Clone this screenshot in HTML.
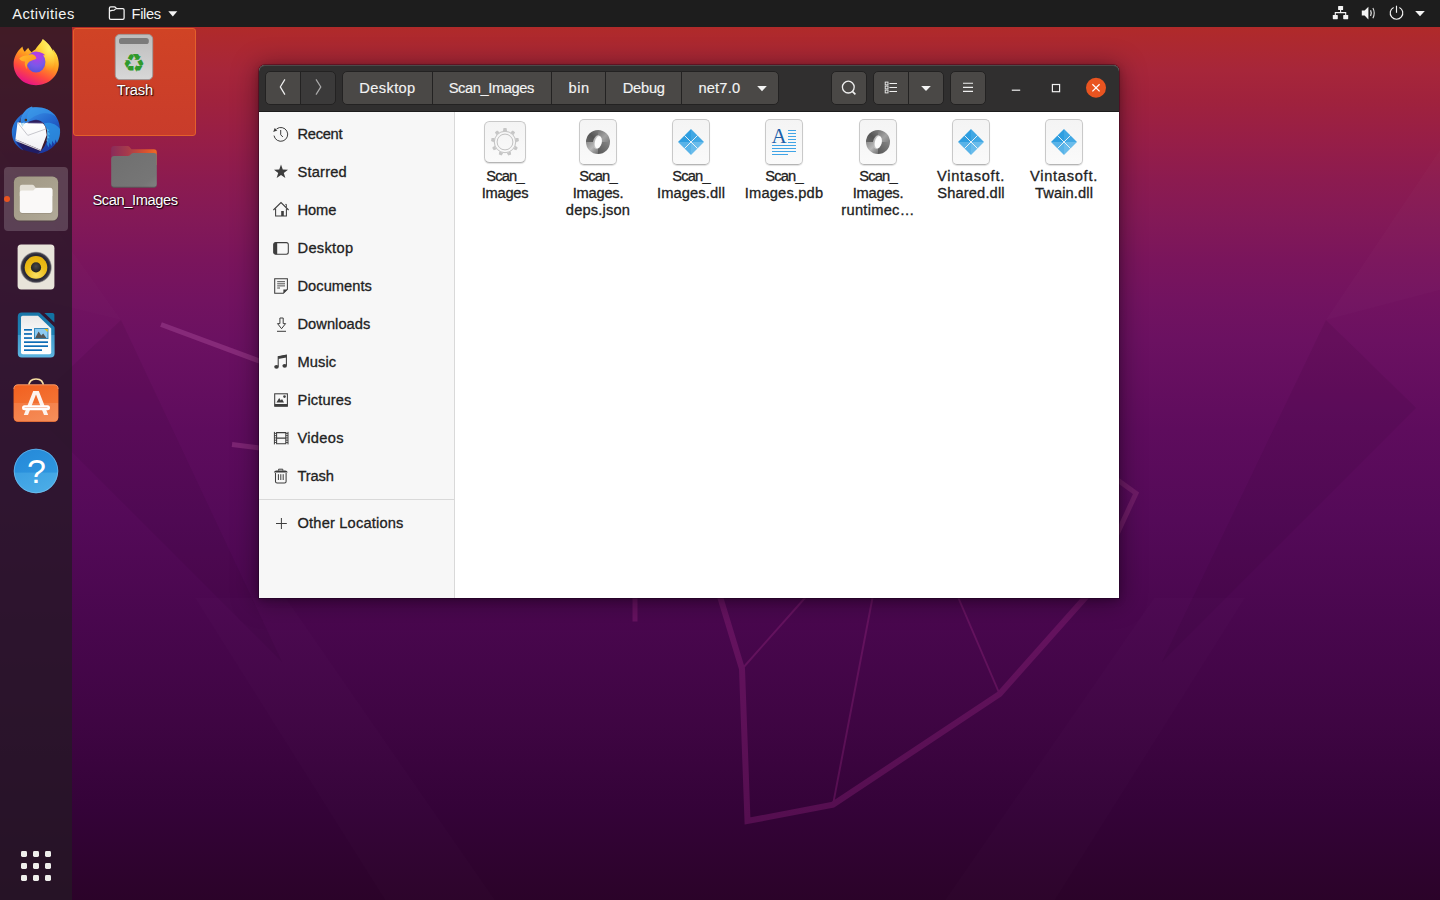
<!DOCTYPE html>
<html lang="en">
<head>
<meta charset="utf-8">
<title>Files</title>
<style>
*{box-sizing:border-box;margin:0;padding:0}
html,body{width:1440px;height:900px;overflow:hidden;background:#2c0428}
body{font-family:"Liberation Sans","DejaVu Sans",sans-serif;font-size:14.67px;color:#2e2e2e;position:relative}
.a{position:absolute}
svg{position:absolute;overflow:visible}
#wall{position:absolute;left:0;top:0;width:1440px;height:900px;
 background:linear-gradient(180deg,#b42c27 0px,#b02a2a 28px,#a7263a 70px,#a0223d 100px,#971e47 140px,#8c1b50 180px,#831957 220px,#7a155c 260px,#721360 300px,#6b1161 340px,#5e0c5d 430px,#540a58 520px,#49074e 620px,#3f0543 720px,#340338 810px,#2b0329 900px)}
/* top bar */
#top{position:absolute;left:0;top:0;width:1440px;height:27px;background:#1d1d1d;color:#f4f4f4}
#top .t{position:absolute;top:0;height:28px;line-height:28px;white-space:nowrap}
/* dock */
#dock{position:absolute;left:0;top:27px;width:72px;height:873px;background:rgba(38,24,38,.8)}
.dsk{position:absolute;color:#fff;white-space:nowrap;text-shadow:1px 1px 1px rgba(0,0,0,.9),0 0 2px rgba(0,0,0,.6)}
/* window */
#win{position:absolute;left:259px;top:65px;width:860px;height:533px;border-radius:6px 6px 0 0;background:#fff;box-shadow:0 0 0 1px rgba(20,0,20,.32),0 2px 7px rgba(0,0,0,.26),0 2px 26px 2px rgba(0,0,0,.36)}
#hb{position:absolute;z-index:2;left:0;top:0;width:860px;height:47px;background:#302f2f;border-radius:6px 6px 0 0;box-shadow:inset 0 1px 0 #4b4a49;border-bottom:1px solid #1c1c1c}
.b{position:absolute;top:6px;height:34px;background:#4a4846;border:1px solid #232222}
.bt{position:absolute;top:6px;height:34px;line-height:34px;color:#f3f3f3;-webkit-text-stroke:.15px #f3f3f3;white-space:nowrap}
#side{position:absolute;left:0;top:46px;width:196px;height:487px;background:#f7f7f7;border-right:1px solid #d9d9d9}
.si{position:absolute;left:38.5px;color:#222;-webkit-text-stroke:.3px #222;white-space:nowrap;height:20px;line-height:20px}
.fl{position:absolute;width:120px;text-align:center;line-height:17px;color:#222;-webkit-text-stroke:.3px #222;white-space:nowrap}
.pg{position:absolute;background:linear-gradient(180deg,#f4f4f4,#fafafa);border:1px solid #c9c9c9;border-bottom-color:#b5b5b5;border-radius:5px;box-shadow:0 1px 1px rgba(0,0,0,.12)}
</style>
</head>
<body>
<div id="wall">
<svg width="1440" height="900" viewBox="0 0 1440 900">
 <!-- subtle facets -->
 <polygon points="121,320 28,408 282,662" fill="#1a0020" opacity=".075"/>
 <polygon points="0,150 0,290 121,320" fill="#ffffff" opacity=".012"/>
 <polygon points="1326,320 1416,408 1162,662" fill="#1a0020" opacity=".075"/>
 <polygon points="1440,150 1440,290 1326,320" fill="#ffffff" opacity=".014"/>
 <polygon points="195,598 286,598 495,900 385,900" fill="#ffffff" opacity=".013"/>
 <polygon points="1245,598 1154,598 945,900 1055,900" fill="#ffffff" opacity=".013"/>
 <defs><linearGradient id="lg" gradientUnits="userSpaceOnUse" x1="0" y1="590" x2="0" y2="830"><stop offset="0" stop-color="#671361"/><stop offset="1" stop-color="#540e4f"/></linearGradient></defs>
 <!-- fossa line art -->
 <g fill="none" stroke-linecap="butt" stroke-linejoin="miter">
  <path d="M161 324.5 L262 362" stroke="#862a79" stroke-width="5"/>
  <path d="M232 444.4 L262 448.2" stroke="#7c2473" stroke-width="5"/>
  <path d="M1110 474.5 L1136 493.3 L1112 545" stroke="#6e1c67" stroke-width="5"/>
  <path d="M635 590 L635 621.5" stroke="#661260" stroke-width="5"/>
  <path d="M718 590 L742 669 L747.5 821 L833 804.6 L999.6 694 L1092 590" stroke="url(#lg)" stroke-width="6"/>
  <path d="M742 669 L812 590 M833 804.6 L874 590 M999.6 694 L955 590" stroke="url(#lg)" stroke-width="1.9"/>
 </g>
</svg>
</div>

<div id="top">
 <span class="t" style="left:12.2px;letter-spacing:.47px">Activities</span>
 <svg style="left:108px;top:5px" width="18" height="16" viewBox="0 0 18 16"><path d="M1.4 3.2 Q1.4 1.9 2.7 1.9 L6.4 1.9 Q7.2 1.9 7.7 2.6 L8.5 3.7 L14.8 3.7 Q16.1 3.7 16.1 5 L16.1 13 Q16.1 14.3 14.8 14.3 L2.7 14.3 Q1.4 14.3 1.4 13 Z M1.4 6.1 Q4.2 5.3 6.2 5.1 L7.6 3.9" fill="none" stroke="#f4f4f4" stroke-width="1.25" stroke-linejoin="round"/></svg>
 <span class="t" style="left:131.6px;letter-spacing:-.39px">Files</span>
 <svg style="left:167.5px;top:11px" width="10" height="6" viewBox="0 0 10 6"><path d="M0.3 0.2 L9.3 0.2 L4.8 5.4 Z" fill="#f4f4f4"/></svg>
 <!-- network -->
 <svg style="left:1332px;top:5px" width="18" height="16" viewBox="0 0 18 16"><g fill="#f4f4f4"><rect x="6.1" y="1" width="5" height="4" rx=".6"/><rect x="0.8" y="10" width="5" height="4.2" rx=".6"/><rect x="11.2" y="10" width="5" height="4.2" rx=".6"/></g><path d="M8.6 5 V7.6 M3.3 10 V7.6 H13.7 V10" fill="none" stroke="#f4f4f4" stroke-width="1.1"/></svg>
 <!-- volume -->
 <svg style="left:1361px;top:5px" width="18" height="16" viewBox="0 0 18 16"><path d="M0.8 5.6 H3.6 L7.4 1.8 V14.4 L3.6 10.6 H0.8 Z" fill="#f4f4f4"/><path d="M9.6 5.2 Q11 8.1 9.6 11" fill="none" stroke="#f4f4f4" stroke-width="1.15"/><path d="M11.9 3 Q14.6 8.1 11.9 13.2" fill="none" stroke="#d8d8d8" stroke-width="1.15"/></svg>
 <!-- power -->
 <svg style="left:1388px;top:4px" width="18" height="18" viewBox="0 0 18 18"><path d="M5.6 3.4 A6.3 6.3 0 1 0 11.4 3.4" fill="none" stroke="#f4f4f4" stroke-width="1.15"/><path d="M8.5 1.7 V8.8" stroke="#f4f4f4" stroke-width="1.15"/></svg>
 <svg style="left:1415px;top:11px" width="10" height="6" viewBox="0 0 10 6"><path d="M0.2 0 L9.8 0 L5 5.2 Z" fill="#f4f4f4"/></svg>
</div>
<div id="dock">
 <!-- coordinates inside dock are page y minus 27 -->
 <!-- Firefox: page (12,38) -->
 <svg style="left:12px;top:11px" width="48" height="48" viewBox="0 0 48 48">
  <defs>
   <linearGradient id="ff1" x1=".8" y1="0" x2=".32" y2="1"><stop offset="0" stop-color="#fff36a"/><stop offset=".22" stop-color="#ffd83a"/><stop offset=".48" stop-color="#ff9a1f"/><stop offset=".74" stop-color="#ff4a3e"/><stop offset="1" stop-color="#e5108c"/></linearGradient>
   <radialGradient id="ff2" cx=".55" cy=".2" r=".9"><stop offset="0" stop-color="#c038e6"/><stop offset=".55" stop-color="#7a58e8"/><stop offset="1" stop-color="#4f52d6"/></radialGradient>
   <linearGradient id="ff3" x1="0" y1="0" x2="1" y2="1"><stop offset="0" stop-color="#ffbd2f"/><stop offset="1" stop-color="#ff8a16"/></linearGradient>
   <radialGradient id="ff4" cx=".7" cy=".3" r=".7"><stop offset="0" stop-color="#fff36a" stop-opacity=".9"/><stop offset="1" stop-color="#ffd83a" stop-opacity="0"/></radialGradient>
  </defs>
  <path d="M10.5 8.4 C4.4 13.6 1.6 19.8 1.6 26 C1.6 38 11.6 47.2 24 47.2 C36.6 47.2 46.8 38 46.8 26 C46.8 19.6 44 14.4 40.6 11 C40.9 12 41.2 13 41.3 14 C39.2 8.6 34.6 3.8 30.8 .9 C29.2 5 25.2 8 23.3 11.4 C22 12 20.6 13 19.6 14.2 C18 12.9 16.6 11.2 16.3 9.8 C15 11 13.6 12.4 12.9 13.8 C11.6 12.2 10.6 10.2 10.5 8.4 Z" fill="url(#ff1)"/>
  <path d="M30.8 .9 C34.6 3.8 39.2 8.6 41.3 14 C43 19 43.5 26 40 32 C36 36 32 30 33.4 24 C33.6 18 28 14 23.3 11.4 C25.2 8 29.2 5 30.8 .9Z" fill="url(#ff4)"/>
  <ellipse cx="24" cy="24" rx="9.4" ry="10.6" fill="url(#ff2)"/>
  <path d="M27 14.2 C30.4 14.6 32.4 16 33.2 17.4 C31.6 17 30.6 17.6 30 19 Z" fill="#a93ee2"/>
  <path d="M7.2 20.6 C9.6 18 13 17.2 16 17.6 C17.4 16.4 19.4 15.8 21 16.4 C23 17.2 24.3 19 24.4 20.6 C22.6 22.2 19.6 22.2 17.6 23.6 C15.2 25.4 14.2 28.6 15.2 31.4 C13 29 12.2 25.8 13.2 23.6 C10.6 23.8 8.4 22.4 7.2 20.6 Z" fill="url(#ff3)"/>
 </svg>
 <!-- Thunderbird: page (12,107) -->
 <svg style="left:11px;top:79px" width="50" height="50" viewBox="0 0 50 50">
  <defs>
   <linearGradient id="tb1" x1=".2" y1="0" x2=".75" y2="1"><stop offset="0" stop-color="#3d97ea"/><stop offset=".45" stop-color="#2468cf"/><stop offset="1" stop-color="#1a2f98"/></linearGradient>
   <linearGradient id="tb2" x1="0" y1="0" x2="1" y2="1"><stop offset="0" stop-color="#2f8be2"/><stop offset=".5" stop-color="#2063c9"/><stop offset="1" stop-color="#1c3aa3"/></linearGradient>
   <linearGradient id="tb3" x1="0" y1="0" x2="0" y2="1"><stop offset="0" stop-color="#ffffff"/><stop offset="1" stop-color="#f1f1f4"/></linearGradient>
  </defs>
  <!-- left ring part -->
  <path d="M12 7.4 C4.4 12.6 .8 20 .8 26 C.8 34.6 5.6 41 12.4 44.4 C10 40 7.4 35 6.6 30 C5.6 24 7.6 16 12 7.4Z" fill="url(#tb2)"/>
  <!-- envelope -->
  <path d="M6.5 16.5 L31.4 16.5 L34.3 20.4 L35.7 29 L30 43.9 L4.4 33.3 Z" fill="url(#tb3)"/>
  <path d="M6.8 16.8 L16.8 29.4 L34.2 23.2" fill="none" stroke="#b9b9c0" stroke-width=".8"/>
  <path d="M4.4 33.3 L30 43.9 L29.4 45 L4.6 35 Z" fill="#c9c9d4"/>
  <!-- dark gap -->
  <path d="M5 35.4 L29.4 45.2 L26.2 47.6 C22 46 18 46 13.4 44.2 C10 42 7 39 5 35.4 Z" fill="#1b1f6e" opacity=".85"/>
  <!-- bird body -->
  <path d="M10.4 18.4 L9.4 15 C10 9 14 3.4 19.6 1 L21 .4 L21.6 1.6 C30 .4 40 3 45.6 11.4 C50.4 19 50 30 45 37.6 C40 44 34 47 26.2 47.8 C31 45 33.6 41 35 37 C37 33 37.2 27 35.4 22 C33.6 16.4 28 13.6 23.6 14.4 C19 15.4 14 17 10.4 18.4 Z" fill="url(#tb1)"/>
  <path d="M21.6 1.6 C30 .4 40 3 45.6 11.4 C42 8 36 6.6 31 7.6 C26 8.6 20 12 16 15.8 C15 11 17 5 21.6 1.6Z" fill="#3a9bea" opacity=".55"/>
  <path d="M9.6 17.6 L13.6 16.6 L11.6 21 Z" fill="#bfe4f2"/>
  <circle cx="14.9" cy="14" r="1.25" fill="#2b1a10"/><circle cx="14.9" cy="14" r=".55" fill="#d88b2a"/>
  <!-- feathers -->
  <path d="M32.8 17.6 C38 15.6 45 17.6 49 23 C49.6 28 48.4 33 46 37 L44.4 33.4 L43.4 38.4 L41.2 34.8 L40.6 40 L38.4 36.6 L37.6 41.4 L35.8 38 C37.4 33 37.4 27 35.4 22 Z" fill="#2f9ae8" opacity=".75"/>
  <path d="M35.4 22 L38.4 24.6 L36.6 25.2 L39.2 28.4 L36.9 28.8 L38.6 32.2 L36.5 32.2 L37 36 L35.4 34.4 C36.6 30 36.6 26 35.4 22Z" fill="#5fc0f2" opacity=".85"/>
  <path d="M17.2 16.5 C20 14.6 23 13.6 25.4 13.8 C28.6 14 31 15.6 32.8 17.9 L31.4 17.5 L16.5 17.2 Z" fill="#2a1f6a" opacity=".8"/>
 </svg>
 <!-- Files highlight: page (4,167) -->
 <div class="a" style="left:4px;top:140px;width:64px;height:64px;border-radius:4px;background:rgba(255,255,255,.18)"></div>
 <div class="a" style="left:4px;top:169px;width:6px;height:6px;border-radius:3px;background:#e95420"></div>
 <svg style="left:13px;top:149px" width="46" height="46" viewBox="0 0 46 46">
  <defs><linearGradient id="fi1" x1="0" y1="0" x2="1" y2="1"><stop offset="0" stop-color="#a19985"/><stop offset=".5" stop-color="#a8a08d"/><stop offset="1" stop-color="#b1aa98"/></linearGradient></defs>
  <rect x=".6" y=".6" width="44.8" height="45" rx="6" fill="#4a4138" opacity=".55"/>
  <rect x=".9" y=".6" width="44.2" height="44" rx="5.6" fill="url(#fi1)"/>
  <path d="M6.8 11 Q6.8 8.8 9 8.8 L19.4 8.8 Q20.4 8.8 21 9.6 L22.6 11.8 L37.4 11.8 Q39.4 11.8 39.4 13.8 L39.4 20 L6.8 20 Z" fill="#e3dfd5"/>
  <path d="M6.8 16.6 Q6.8 14.6 8.8 14.6 L19.2 14.6 Q20.2 14.6 20.9 13.9 L22 12.6 Q22.7 11.9 23.7 11.9 L37.4 11.9 Q39.4 11.9 39.4 13.9 L39.4 34.8 Q39.4 37 37.2 37 L9 37 Q6.8 37 6.8 34.8 Z" fill="#faf9f8"/>
  <path d="M6.8 34 Q6.8 37 9 37 L37.2 37 Q39.4 37 39.4 34 L39.4 34.8 Q39.4 37.8 37.2 37.8 L9 37.8 Q6.8 37.8 6.8 34.8Z" fill="#8c8473" opacity=".6"/>
 </svg>
 <!-- Rhythmbox: page (17.6,244.6) -->
 <svg style="left:17px;top:217px" width="38" height="46" viewBox="0 0 38 46">
  <defs>
   <radialGradient id="rb1" cx=".5" cy=".85" r=".85"><stop offset="0" stop-color="#f8df62"/><stop offset=".55" stop-color="#ecbd19"/><stop offset="1" stop-color="#e6b10c"/></radialGradient>
   <radialGradient id="rb2" cx=".5" cy=".5" r=".5"><stop offset="0" stop-color="#2a2936"/><stop offset=".8" stop-color="#2a2936"/><stop offset=".9" stop-color="#34323f" stop-opacity=".9"/><stop offset="1" stop-color="#6a6870" stop-opacity=".0"/></radialGradient>
   <radialGradient id="rb3" cx=".5" cy=".4" r=".6"><stop offset="0" stop-color="#4a4a4a"/><stop offset="1" stop-color="#1e1e1e"/></radialGradient>
  </defs>
  <rect x=".6" y=".6" width="36.8" height="44.8" rx="3.6" fill="#e8e4da"/>
  <circle cx="19" cy="23.4" r="16.2" fill="url(#rb2)"/>
  <circle cx="19" cy="23.4" r="11.3" fill="url(#rb1)"/>
  <circle cx="19" cy="23.4" r="5.1" fill="url(#rb3)"/>
 </svg>
 <!-- Writer: page (17.8,312.6) -->
 <svg style="left:17px;top:285px" width="38" height="46" viewBox="0 0 38 46">
  <defs>
   <linearGradient id="lw1" x1="0" y1="0" x2="0" y2="1"><stop offset="0" stop-color="#1876a8"/><stop offset=".49" stop-color="#1f82b6"/><stop offset=".51" stop-color="#3f9bcd"/><stop offset="1" stop-color="#5db4e0"/></linearGradient>
   <linearGradient id="lw2" x1="0" y1="0" x2="0" y2="1"><stop offset="0" stop-color="#e9e9e9"/><stop offset=".5" stop-color="#fafafa"/><stop offset="1" stop-color="#ffffff"/></linearGradient>
  </defs>
  <path d="M.8 4.6 Q.8 .6 4.8 .6 L21.4 .6 Q22.6 .6 23.4 1.4 L36.8 14.2 Q37.6 15 37.6 16 L37.6 41.4 Q37.6 45.4 33.6 45.4 L4.8 45.4 Q.8 45.4 .8 41.4 Z" fill="url(#lw1)"/>
  <path d="M4 5.4 Q4 3.8 5.6 3.8 L21 3.8 L34.2 16.4 L34.2 40.4 Q34.2 42.2 32.4 42.2 L5.8 42.2 Q4 42.2 4 40.4 Z" fill="url(#lw2)"/>
  <path d="M27.4 1 L35.6 1 Q37.4 1 37.4 2.8 L37.4 10.4 Z" fill="#1272a3"/>
  <g fill="#0d6cb5"><rect x="7" y="17" width="8" height="1.7"/><rect x="7" y="21.1" width="8" height="1.7"/><rect x="7" y="25.2" width="8" height="1.7"/><rect x="7" y="29.3" width="24" height="1.7"/><rect x="7" y="33.3" width="24" height="1.7"/><rect x="7" y="37.3" width="18" height="1.7"/></g>
  <rect x="17.4" y="16.6" width="13.6" height="10" fill="#8ccaf2" stroke="#1677b0" stroke-width=".8"/>
  <path d="M18 26.2 L21.6 19.6 L24.2 23.6 L26.2 21.6 L29.6 26.2 Z" fill="#555"/>
  <path d="M27.4 17 L30.6 17 L30.6 20 Z" fill="#f5c400"/>
 </svg>
 <!-- Software: page (13.8,384.8) bag; handle top 379 -->
 <svg style="left:13px;top:350px" width="46" height="46" viewBox="0 0 46 46">
  <defs>
   <linearGradient id="sw1" x1="0" y1="0" x2="1" y2="1"><stop offset="0" stop-color="#f2601f"/><stop offset="1" stop-color="#f37435"/></linearGradient>
   <linearGradient id="sw2" x1="0" y1="0" x2="1" y2="1"><stop offset="0" stop-color="#f47a41"/><stop offset="1" stop-color="#f58f5b"/></linearGradient>
  </defs>
  <path d="M15.8 9.6 Q15.8 2 23 2 Q30.4 2 30.4 9.6" fill="none" stroke="#f8dfa2" stroke-width="1.7"/>
  <rect x=".6" y="7.6" width="44.8" height="37.4" rx="4.4" fill="#c8501e"/>
  <path d="M.8 12 Q.8 7.8 5 7.8 L41 7.8 Q45.2 7.8 45.2 12 L45.2 26 L.8 26 Z" fill="url(#sw1)"/>
  <path d="M.8 26 L45.2 26 L45.2 40.2 Q45.2 44.4 41 44.4 L5 44.4 Q.8 44.4 .8 40.2 Z" fill="url(#sw2)"/>
  <path d="M.8 12 Q.8 7.8 5 7.8 L41 7.8 Q45.2 7.8 45.2 12" fill="none" stroke="#fbb48a" stroke-width=".8" opacity=".8"/>
  <path d="M20.2 14 L25.8 14 L35.2 38 L31 38 L23 17.6 L15 38 L10.8 38 Z" fill="#fdf3ee"/>
  <rect x="9" y="28.2" width="28" height="5" rx="2.5" fill="#ffffff"/>
  <rect x="11.4" y="30.3" width="23.2" height=".8" rx=".4" fill="#f9b9a0"/>
 </svg>
 <!-- Help: page center (36,471) r 22.2 -->
 <svg style="left:13px;top:421px" width="46" height="46" viewBox="0 0 46 46">
  <defs><linearGradient id="hp1" x1="0" y1="0" x2="1" y2="1"><stop offset="0" stop-color="#2488d8"/><stop offset="1" stop-color="#2f97e0"/></linearGradient>
  <linearGradient id="hp2" x1="0" y1="0" x2="1" y2="1"><stop offset="0" stop-color="#3b9fe2"/><stop offset="1" stop-color="#4fb0e8"/></linearGradient>
  <clipPath id="hpc"><circle cx="23" cy="23" r="22.2"/></clipPath></defs>
  <g clip-path="url(#hpc)"><rect x="0" y="0" width="46" height="26" fill="url(#hp1)"/><rect x="0" y="24.6" width="46" height="22" fill="url(#hp2)"/></g>
  <circle cx="23" cy="23" r="21.8" fill="none" stroke="#8fcbf2" stroke-width=".7" opacity=".7"/>
  <text x="23.4" y="35.4" text-anchor="middle" font-family="Liberation Sans, sans-serif" font-size="34" fill="#ffffff">?</text>
 </svg>
 <!-- apps grid: page (21,851) -->
 <svg style="left:21px;top:824px" width="30" height="30" viewBox="0 0 30 30"><g fill="#eeeeec"><rect x="0" y="0" width="6" height="6" rx="1.4"/><rect x="12" y="0" width="6" height="6" rx="1.4"/><rect x="24" y="0" width="6" height="6" rx="1.4"/><rect x="0" y="12" width="6" height="6" rx="1.4"/><rect x="12" y="12" width="6" height="6" rx="1.4"/><rect x="24" y="12" width="6" height="6" rx="1.4"/><rect x="0" y="24" width="6" height="6" rx="1.4"/><rect x="12" y="24" width="6" height="6" rx="1.4"/><rect x="24" y="24" width="6" height="6" rx="1.4"/></g></svg>
</div>

<!-- desktop icons -->
<div class="a" style="left:73px;top:28px;width:123px;height:108px;border-radius:3px;background:linear-gradient(180deg,#d04325,#c93c2b);border:1px solid #e3602b"></div>
<svg style="left:114px;top:33px" width="40" height="48" viewBox="0 0 40 48">
 <defs><linearGradient id="tr1" x1="0" y1="0" x2="0" y2="1"><stop offset="0" stop-color="#bcbcbc"/><stop offset="1" stop-color="#d8d8d8"/></linearGradient></defs>
 <rect x="1.3" y="1.4" width="37.4" height="45.2" rx="4.6" fill="url(#tr1)" stroke="#9b9b9b" stroke-width=".9"/>
 <rect x="5" y="5" width="29.8" height="6" rx="2.6" fill="#7b7b7b"/>
 <text x="20" y="39.2" text-anchor="middle" font-family="DejaVu Sans, sans-serif" font-size="25.5" fill="#2f9a2c">♻</text>
</svg>
<span class="dsk" style="left:116.7px;top:81px;line-height:18px;letter-spacing:-.11px">Trash</span>
<svg style="left:110px;top:145px" width="48" height="44" viewBox="0 0 48 44">
 <defs><linearGradient id="fo1" x1="0" y1="0" x2="1" y2="0"><stop offset="0" stop-color="#8a2c5a"/><stop offset=".35" stop-color="#a53a4c"/><stop offset=".75" stop-color="#d8522f"/><stop offset="1" stop-color="#ee6a24"/></linearGradient>
 <linearGradient id="fo2" x1="0" y1="0" x2="1" y2="1"><stop offset="0" stop-color="#6f6f6f"/><stop offset=".8" stop-color="#767676"/><stop offset="1" stop-color="#808080"/></linearGradient></defs>
 <path d="M1.2 4 Q1.2 1 4.2 1 L17.6 1 Q18.8 1 19.6 1.9 L21.4 4.2 L43.8 4.2 Q46.8 4.2 46.8 7.2 L46.8 20 L1.2 20 Z" fill="url(#fo1)"/>
 <path d="M1.2 14 Q1.2 11 4.2 11 L17.8 11 Q19 11 19.9 10.2 L21.4 8.8 Q22.3 8 23.5 8 L43.8 8 Q46.8 8 46.8 11 L46.8 39.6 Q46.8 42.6 43.8 42.6 L4.2 42.6 Q1.2 42.6 1.2 39.6 Z" fill="url(#fo2)"/>
 <path d="M1.2 38.8 Q1.2 41.8 4.2 41.8 L43.8 41.8 Q46.8 41.8 46.8 38.8 L46.8 39.8 Q46.8 42.8 43.8 42.8 L4.2 42.8 Q1.2 42.8 1.2 39.8Z" fill="#4d4d4d" opacity=".7"/>
</svg>
<span class="dsk" style="left:92.4px;top:191px;line-height:18px;letter-spacing:-.39px">Scan_Images</span>
<div id="win">
 <div id="hb">
  <!-- nav -->
  <div class="b" style="left:6px;width:36px;border-radius:5px 0 0 5px"></div>
  <div class="b" style="left:41px;width:36px;border-radius:0 5px 5px 0;background:#3b3a3a"></div>
  <svg style="left:0;top:0" width="90" height="46" viewBox="0 0 90 46"><path d="M25.9 14.4 L21.3 21.9 L25.9 29.6" fill="none" stroke="#f0f0f0" stroke-width="1.2"/><path d="M57 14.4 L61.8 21.9 L57 29.6" fill="none" stroke="#a9a9a9" stroke-width="1.2"/></svg>
  <!-- path bar -->
  <div class="b" style="left:83px;width:91px;border-radius:5px 0 0 5px"></div>
  <div class="b" style="left:173px;width:120px;border-radius:0"></div>
  <div class="b" style="left:292px;width:55px;border-radius:0"></div>
  <div class="b" style="left:346px;width:77px;border-radius:0"></div>
  <div class="b" style="left:422px;width:98px;border-radius:0 5px 5px 0"></div>
  <span class="bt" style="left:100.3px;letter-spacing:.36px">Desktop</span>
  <span class="bt" style="left:189.7px;letter-spacing:-.39px">Scan_Images</span>
  <span class="bt" style="left:309.5px;letter-spacing:.51px">bin</span>
  <span class="bt" style="left:363.7px;letter-spacing:-.23px">Debug</span>
  <span class="bt" style="left:439.5px;letter-spacing:.16px">net7.0</span>
  <svg style="left:498px;top:20px" width="10" height="7" viewBox="0 0 10 7"><path d="M.2 .9 L9.8 .9 L5 6.3 Z" fill="#f3f3f3"/></svg>
  <!-- search -->
  <div class="b" style="left:572px;width:36px;border-radius:5px"></div>
  <svg style="left:580px;top:13px" width="20" height="20" viewBox="0 0 20 20"><circle cx="9.3" cy="9.1" r="5.9" fill="none" stroke="#f0f0f0" stroke-width="1.3"/><path d="M13.4 13.4 L16.4 16.4" stroke="#f0f0f0" stroke-width="1.6"/></svg>
  <!-- view -->
  <div class="b" style="left:614px;width:36px;border-radius:5px 0 0 5px"></div>
  <div class="b" style="left:649px;width:36px;border-radius:0 5px 5px 0"></div>
  <svg style="left:625px;top:15px" width="14" height="14" viewBox="0 0 14 14"><g fill="none" stroke="#f0f0f0" stroke-width=".9"><rect x="1.2" y="2.1" width="2.8" height="2.8"/><rect x="1.2" y="6.1" width="2.8" height="2.8"/><rect x="1.2" y="10.1" width="2.8" height="2.8"/></g><path d="M5.4 3.5 H13 M5.4 7.5 H13 M5.4 11.5 H13" stroke="#f0f0f0" stroke-width="1.1"/></svg>
  <svg style="left:662px;top:20px" width="10" height="7" viewBox="0 0 10 7"><path d="M.2 .9 L9.8 .9 L5 6.1 Z" fill="#f3f3f3"/></svg>
  <!-- menu -->
  <div class="b" style="left:691px;width:36px;border-radius:5px"></div>
  <svg style="left:703px;top:15px" width="12" height="14" viewBox="0 0 12 14"><path d="M1 3.2 H11 M1 7.3 H11 M1 11.4 H11" stroke="#f0f0f0" stroke-width="1.15"/></svg>
  <!-- window controls -->
  <svg style="left:745px;top:10px" width="110" height="26" viewBox="0 0 110 26"><path d="M7.8 15.2 H16.2" stroke="#f0f0f0" stroke-width="1.2"/><rect x="48.4" y="9.5" width="7.2" height="7.2" fill="none" stroke="#f0f0f0" stroke-width="1.2"/><circle cx="92" cy="12.8" r="10" fill="#e95420"/><path d="M88.4 9.2 L95.6 16.4 M95.6 9.2 L88.4 16.4" stroke="#ffffff" stroke-width="1.25"/></svg>
 </div>
 <div id="side">
  <!-- icons at x=14, rows centre 23+38i -->
  <svg style="left:14px;top:15px" width="16" height="16" viewBox="0 0 16 16"><path d="M1 9.6 A6.9 6.9 0 1 0 3.6 2.9" fill="none" stroke="#3d3d3d" stroke-width="1"/><path d="M.2 5.9 L1.7 2.1 L4.3 4.6 Z" fill="#3d3d3d"/><path d="M7.7 4 V8.8 L9.9 11" fill="none" stroke="#3d3d3d" stroke-width="1"/></svg>
  <svg style="left:14px;top:53px" width="16" height="16" viewBox="0 0 16 16"><path d="M8 .6 L9.75 5.6 L15 5.7 L10.8 8.9 L12.35 14 L8 10.95 L3.65 14 L5.2 8.9 L1 5.7 L6.25 5.6 Z" fill="#3d3d3d"/></svg>
  <svg style="left:14px;top:91px" width="16" height="16" viewBox="0 0 16 16"><path d="M.4 8 L8 .6 L15.6 8" fill="none" stroke="#3d3d3d" stroke-width="1.05"/><path d="M2.6 6.4 V14 H13.4 V6.4" fill="none" stroke="#3d3d3d" stroke-width="1.05"/><rect x="8.2" y="9" width="2.6" height="5" fill="#3d3d3d"/><path d="M12.3 2.4 H13.4 V5" fill="none" stroke="#3d3d3d" stroke-width=".9"/></svg>
  <svg style="left:14px;top:129px" width="16" height="16" viewBox="0 0 16 16"><rect x=".7" y="2.6" width="14.6" height="11.6" rx="2" fill="none" stroke="#3d3d3d" stroke-width="1.05"/><path d="M2.7 2.6 H4.2 V14.2 H2.7 Q.7 14.2 .7 12.2 V4.6 Q.7 2.6 2.7 2.6Z" fill="#3d3d3d"/></svg>
  <svg style="left:14px;top:167px" width="16" height="16" viewBox="0 0 16 16"><path d="M1.7 .8 H14.4 V11.4 L10.4 15.3 H1.7 Z" fill="none" stroke="#3d3d3d" stroke-width="1.05"/><path d="M14.4 11.4 H10.4 V15.3 Z" fill="#3d3d3d"/><path d="M4.2 3.7 H12 M4.2 5.8 H12 M4.2 7.9 H12 M4.2 10 H7" stroke="#3d3d3d" stroke-width=".9"/></svg>
  <svg style="left:14px;top:205px" width="16" height="16" viewBox="0 0 16 16"><path d="M6.9 2 H10.2 V7.6 H12.6 L8.55 12.7 L4.5 7.6 H6.9 Z" fill="none" stroke="#3d3d3d" stroke-width="1"/><path d="M4 15.3 H13" stroke="#3d3d3d" stroke-width="1"/></svg>
  <svg style="left:14px;top:243px" width="16" height="16" viewBox="0 0 16 16"><path d="M5.2 12.6 V2.8 L13.4 1.2 V11.6" fill="none" stroke="#3d3d3d" stroke-width="1.05"/><path d="M5.2 2.4 L13.4 .8 V3.4 L5.2 5 Z" fill="#3d3d3d"/><ellipse cx="3.5" cy="12.8" rx="2.3" ry="1.9" fill="#3d3d3d"/><ellipse cx="11.7" cy="11.8" rx="2.3" ry="1.9" fill="#3d3d3d"/></svg>
  <svg style="left:14px;top:281px" width="16" height="16" viewBox="0 0 16 16"><rect x="1.7" y="1.8" width="12.7" height="12.4" fill="none" stroke="#3d3d3d" stroke-width="1.05"/><rect x="1.7" y="12" width="12.7" height="2.4" fill="#3d3d3d"/><path d="M3.4 10.6 L6.2 6 L7.8 8.4 L9 7 L11 10.6 Z" fill="#3d3d3d"/><circle cx="11.5" cy="4.6" r="1.3" fill="#3d3d3d"/></svg>
  <svg style="left:14px;top:319px" width="16" height="16" viewBox="0 0 16 16"><path d="M1.4 1.9 V14.4 M15 1.9 V14.4" stroke="#3d3d3d" stroke-width="1"/><path d="M3.6 2.6 H12.8 V13.7 H3.6 Z M3.6 8.1 H12.8" fill="none" stroke="#3d3d3d" stroke-width="1.05"/><path d="M1.4 3.4 H3.4 M1.4 5.6 H3.4 M1.4 7.9 H3.4 M1.4 10.2 H3.4 M1.4 12.5 H3.4 M13 3.4 H15 M13 5.6 H15 M13 7.9 H15 M13 10.2 H15 M13 12.5 H15" stroke="#3d3d3d" stroke-width=".9"/></svg>
  <svg style="left:14px;top:357px" width="16" height="16" viewBox="0 0 16 16"><path d="M5.6 2.6 V1.2 H9.8 V2.6" fill="none" stroke="#3d3d3d" stroke-width="1"/><path d="M.9 4.6 Q1.4 2.6 3.4 2.6 H12.2 Q14.2 2.6 14.7 4.6 Z" fill="#3d3d3d"/><path d="M2.5 5 V13.4 Q2.5 15 4.1 15 H11.5 Q13.1 15 13.1 13.4 V5" fill="none" stroke="#3d3d3d" stroke-width="1.05"/><path d="M5.4 6.2 V12 M7.8 6.2 V12 M10.2 6.2 V12" stroke="#3d3d3d" stroke-width="1"/></svg>
  <svg style="left:14px;top:404px" width="16" height="16" viewBox="0 0 16 16"><path d="M3 8.5 H13.8 M8.4 3 V14" stroke="#3d3d3d" stroke-width="1"/></svg>
  <span class="si" style="top:13px;letter-spacing:-.28px">Recent</span>
  <span class="si" style="top:51px;letter-spacing:.2px">Starred</span>
  <span class="si" style="top:89px;letter-spacing:-.08px">Home</span>
  <span class="si" style="top:127px;letter-spacing:.3px">Desktop</span>
  <span class="si" style="top:165px;letter-spacing:.03px">Documents</span>
  <span class="si" style="top:203px;letter-spacing:.03px">Downloads</span>
  <span class="si" style="top:241px;letter-spacing:.1px">Music</span>
  <span class="si" style="top:279px;letter-spacing:.13px">Pictures</span>
  <span class="si" style="top:317px;letter-spacing:.3px">Videos</span>
  <span class="si" style="top:355px;letter-spacing:-.11px">Trash</span>
  <div class="a" style="left:0;top:388px;width:195px;height:1px;background:#d9d9d9"></div>
  <span class="si" style="top:402px;letter-spacing:.17px">Other Locations</span>
 </div>
 <!-- files; coordinates relative to window (259,65) -->
 <!-- 1 executable: centre 246 -->
 <div class="pg" style="left:225px;top:56px;width:42px;height:42px;border-radius:5.5px"></div>
 <svg style="left:231px;top:62px" width="30" height="30" viewBox="-15 -15 30 30"><g fill="#c6c6c6"><path transform="rotate(0)" d="M-2.1 -11 L-1.5 -13.9 L1.5 -13.9 L2.1 -11 Z"/><path transform="rotate(40)" d="M-2.1 -11 L-1.5 -13.9 L1.5 -13.9 L2.1 -11 Z"/><path transform="rotate(80)" d="M-2.1 -11 L-1.5 -13.9 L1.5 -13.9 L2.1 -11 Z"/><path transform="rotate(120)" d="M-2.1 -11 L-1.5 -13.9 L1.5 -13.9 L2.1 -11 Z"/><path transform="rotate(160)" d="M-2.1 -11 L-1.5 -13.9 L1.5 -13.9 L2.1 -11 Z"/><path transform="rotate(200)" d="M-2.1 -11 L-1.5 -13.9 L1.5 -13.9 L2.1 -11 Z"/><path transform="rotate(240)" d="M-2.1 -11 L-1.5 -13.9 L1.5 -13.9 L2.1 -11 Z"/><path transform="rotate(280)" d="M-2.1 -11 L-1.5 -13.9 L1.5 -13.9 L2.1 -11 Z"/><path transform="rotate(320)" d="M-2.1 -11 L-1.5 -13.9 L1.5 -13.9 L2.1 -11 Z"/></g><circle r="10.7" fill="none" stroke="#c2c2c2" stroke-width="1"/><circle r="7.9" fill="none" stroke="#c2c2c2" stroke-width="1"/></svg>
 <!-- 2 json: centre 339 -->
 <div class="pg" style="left:320px;top:54px;width:38px;height:46px"></div>
 <svg style="left:326px;top:64px" width="26" height="26" viewBox="-13 -13 26 26"><defs><linearGradient id="jq1" x1="0" y1="1" x2="1" y2="0"><stop offset="0" stop-color="#666"/><stop offset=".5" stop-color="#555"/><stop offset="1" stop-color="#7c7c7c"/></linearGradient><linearGradient id="jq2" x1="0" y1="0" x2="1" y2="1"><stop offset="0" stop-color="#747474"/><stop offset=".55" stop-color="#a2a2a2"/><stop offset="1" stop-color="#7e7e7e"/></linearGradient><linearGradient id="jq3" x1="1" y1="0" x2="0" y2="1"><stop offset="0" stop-color="#868686"/><stop offset="1" stop-color="#565656"/></linearGradient><linearGradient id="jq4" x1="0" y1="0" x2="1" y2="1"><stop offset="0" stop-color="#8c8c8c"/><stop offset=".5" stop-color="#b8b8b8"/><stop offset="1" stop-color="#6e6e6e"/></linearGradient><linearGradient id="jq5" x1="0" y1="0" x2="1" y2="0"><stop offset="0" stop-color="#a8a8a8"/><stop offset=".5" stop-color="#d8d8d8"/><stop offset="1" stop-color="#b0b0b0"/></linearGradient></defs><g><path d="M0 0 L-12 0 A12 12 0 0 1 0 -12 Z" fill="url(#jq1)"/><path d="M0 0 L0 -12 A12 12 0 0 1 12 0 Z" fill="url(#jq2)"/><path d="M0 0 L12 0 A12 12 0 0 1 0 12 Z" fill="url(#jq3)"/><path d="M0 0 L0 12 A12 12 0 0 1 -12 0 Z" fill="url(#jq4)"/><ellipse cx="-.5" cy=".2" rx="4.5" ry="6.8" transform="rotate(12)" fill="url(#jq5)"/><ellipse cx=".3" cy=".2" rx="3.4" ry="6.1" transform="rotate(13)" fill="#fbfbfb"/></g></svg>
 <!-- 3 dll: centre 432 -->
 <div class="pg" style="left:413px;top:54px;width:38px;height:46px"></div>
 <svg style="left:418px;top:63px" width="28" height="28" viewBox="-14 -14 28 28"><g><path d="M0 -13 L-13 0 L0 0 Z" fill="#2e9ee0"/><path d="M0 -13 L13 0 L0 0 Z" fill="#41a8e4"/><path d="M-13 0 L0 13 L0 0 Z" fill="#58b3e8"/><path d="M13 0 L0 13 L0 0 Z" fill="#6abceb"/><path d="M-6.5 -6.5 L6.5 6.5 M6.5 -6.5 L-6.5 6.5" stroke="#f8f8f8" stroke-width=".9"/></g></svg>
 <!-- 4 pdb: centre 525 -->
 <div class="pg" style="left:506px;top:54px;width:38px;height:46px"></div>
 <svg style="left:506px;top:54px" width="38" height="46" viewBox="0 0 38 46"><text x="14" y="23.7" text-anchor="middle" font-family="Liberation Serif, serif" font-size="21" fill="#1b5fa9">A</text><path d="M23 11.5 H31 M23 14.5 H31 M23 17.5 H31 M23 20.5 H31 M23 23.5 H31 M7 26.5 H31 M7 29.5 H31 M7 32.5 H31 M7 35.5 H23" stroke="#40a4e6" stroke-width="1"/></svg>
 <!-- 5 json: centre 619 -->
 <div class="pg" style="left:600px;top:54px;width:38px;height:46px"></div>
 <svg style="left:606px;top:64px" width="26" height="26" viewBox="-13 -13 26 26"><g><path d="M0 0 L-12 0 A12 12 0 0 1 0 -12 Z" fill="url(#jq1)"/><path d="M0 0 L0 -12 A12 12 0 0 1 12 0 Z" fill="url(#jq2)"/><path d="M0 0 L12 0 A12 12 0 0 1 0 12 Z" fill="url(#jq3)"/><path d="M0 0 L0 12 A12 12 0 0 1 -12 0 Z" fill="url(#jq4)"/><ellipse cx="-.5" cy=".2" rx="4.5" ry="6.8" transform="rotate(12)" fill="url(#jq5)"/><ellipse cx=".3" cy=".2" rx="3.4" ry="6.1" transform="rotate(13)" fill="#fbfbfb"/></g></svg>
 <!-- 6 dll: centre 712 -->
 <div class="pg" style="left:693px;top:54px;width:38px;height:46px"></div>
 <svg style="left:698px;top:63px" width="28" height="28" viewBox="-14 -14 28 28"><g><path d="M0 -13 L-13 0 L0 0 Z" fill="#2e9ee0"/><path d="M0 -13 L13 0 L0 0 Z" fill="#41a8e4"/><path d="M-13 0 L0 13 L0 0 Z" fill="#58b3e8"/><path d="M13 0 L0 13 L0 0 Z" fill="#6abceb"/><path d="M-6.5 -6.5 L6.5 6.5 M6.5 -6.5 L-6.5 6.5" stroke="#f8f8f8" stroke-width=".9"/></g></svg>
 <!-- 7 dll: centre 805 -->
 <div class="pg" style="left:786px;top:54px;width:38px;height:46px"></div>
 <svg style="left:791px;top:63px" width="28" height="28" viewBox="-14 -14 28 28"><g><path d="M0 -13 L-13 0 L0 0 Z" fill="#2e9ee0"/><path d="M0 -13 L13 0 L0 0 Z" fill="#41a8e4"/><path d="M-13 0 L0 13 L0 0 Z" fill="#58b3e8"/><path d="M13 0 L0 13 L0 0 Z" fill="#6abceb"/><path d="M-6.5 -6.5 L6.5 6.5 M6.5 -6.5 L-6.5 6.5" stroke="#f8f8f8" stroke-width=".9"/></g></svg>
 <!-- labels -->
 <div class="fl" style="left:186px;top:102.5px"><span style="letter-spacing:-.77px">Scan_</span><br><span style="letter-spacing:-.28px">Images</span></div>
 <div class="fl" style="left:279px;top:102.5px"><span style="letter-spacing:-.77px">Scan_</span><br><span style="letter-spacing:-.2px">Images.</span><br><span style="letter-spacing:.18px">deps.json</span></div>
 <div class="fl" style="left:372px;top:102.5px"><span style="letter-spacing:-.77px">Scan_</span><br><span style="letter-spacing:.13px">Images.dll</span></div>
 <div class="fl" style="left:465px;top:102.5px"><span style="letter-spacing:-.77px">Scan_</span><br><span style="letter-spacing:.19px">Images.pdb</span></div>
 <div class="fl" style="left:559px;top:102.5px"><span style="letter-spacing:-.77px">Scan_</span><br><span style="letter-spacing:-.2px">Images.</span><br><span style="letter-spacing:.27px">runtimec…</span></div>
 <div class="fl" style="left:652px;top:102.5px"><span style="letter-spacing:.71px">Vintasoft.</span><br><span style="letter-spacing:.14px">Shared.dll</span></div>
 <div class="fl" style="left:745px;top:102.5px"><span style="letter-spacing:.71px">Vintasoft.</span><br><span style="letter-spacing:.12px">Twain.dll</span></div>
</div>
</body>
</html>
